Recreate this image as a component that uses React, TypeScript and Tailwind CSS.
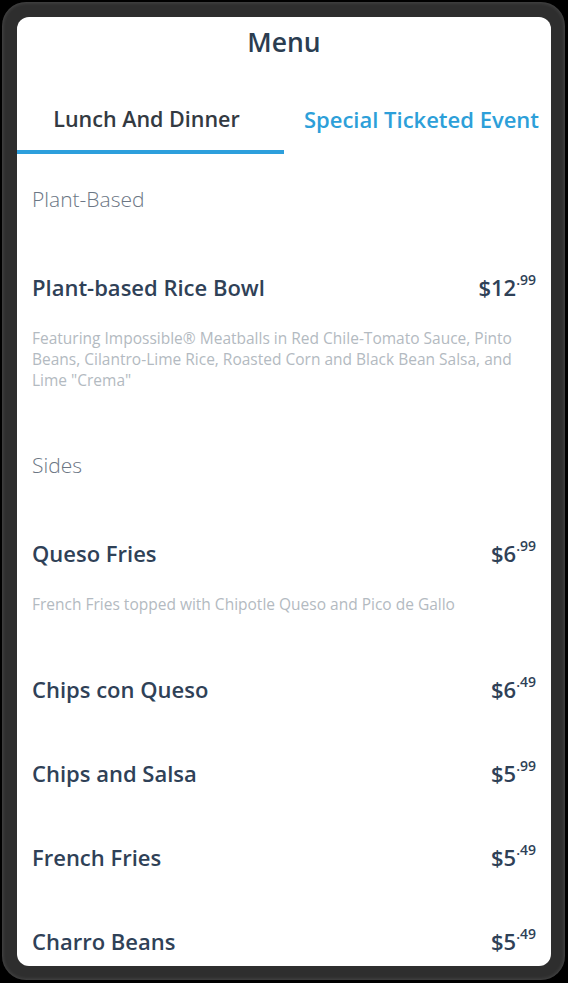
const font = { fontFamily: '"Open Sans", "Noto Sans", sans-serif' };

type Item = { name: string; price: string; cents: string; desc?: string };
type Section = { title: string; items: Item[] };

const sections: Section[] = [
  {
    title: 'Plant-Based',
    items: [
      {
        name: 'Plant-based Rice Bowl',
        price: '$12',
        cents: '.99',
        desc: 'Featuring Impossible® Meatballs in Red Chile-Tomato Sauce, Pinto Beans, Cilantro-Lime Rice, Roasted Corn and Black Bean Salsa, and Lime "Crema"',
      },
    ],
  },
  {
    title: 'Sides',
    items: [
      {
        name: 'Queso Fries',
        price: '$6',
        cents: '.99',
        desc: 'French Fries topped with Chipotle Queso and Pico de Gallo',
      },
      { name: 'Chips con Queso', price: '$6', cents: '.49' },
      { name: 'Chips and Salsa', price: '$5', cents: '.99' },
      { name: 'French Fries', price: '$5', cents: '.49' },
      { name: 'Charro Beans', price: '$5', cents: '.49' },
    ],
  },
];

function MenuItem({ item }: { item: Item }) {
  return (
    <div className="pt-[56px]">
      <div className="flex h-[28px] items-center justify-between">
        <span className="text-[22px] font-semibold text-[#2f4157]">{item.name}</span>
        <span className="flex items-start text-[22px] font-semibold leading-none text-[#2f4157]">
          {item.price}
          <span className="-mt-[3px] text-[14px] font-semibold">{item.cents}</span>
        </span>
      </div>
      {item.desc && (
        <p className="mt-[27px] pb-[4px] text-[15.5px] leading-[21px] text-[#b3bac1]">{item.desc}</p>
      )}
    </div>
  );
}

export default function App() {
  return (
    <div className="h-[983px] w-[568px] overflow-hidden bg-black pl-[2px] pt-[2px]" style={font}>
      <div className="h-[978px] w-[563px] rounded-[24px] bg-[#2e2e2e] p-[15px] shadow-[inset_0_0_4px_rgba(255,255,255,0.18)]">
        <div className="h-[949px] w-[534px] overflow-hidden rounded-[12px] bg-white">
          {/* Header */}
          <div className="flex h-[52px] items-center justify-center">
            <h1 className="text-[26.5px] font-semibold text-[#2b3d51]">Menu</h1>
          </div>

          {/* Tabs */}
          <div className="flex">
            <div className="flex flex-1 flex-col items-center">
              <span className="mt-[38px] h-[24px] pr-[8px] text-[21.5px] font-semibold leading-[24px] text-[#333a42]">
                Lunch And Dinner
              </span>
              <div className="mt-[19px] h-[4px] w-full bg-[#2d9fdc]" />
            </div>
            <div className="flex flex-1 flex-col items-center">
              <span className="mt-[38px] h-[24px] whitespace-nowrap pl-[8px] text-[22px] font-semibold leading-[24px] text-[#2d9fd9]">
                Special Ticketed Event
              </span>
            </div>
          </div>

          {/* Menu list */}
          <div className="px-[15px]">
            {sections.map((section, i) => (
              <div key={section.title}>
                <h2
                  className={`${i === 0 ? 'pt-[31px]' : 'pt-[56px]'} pb-[4px] text-[21px] font-light leading-[28px] text-[#6b7684]`}
                >
                  {section.title}
                </h2>
                {section.items.map((item) => (
                  <MenuItem key={item.name} item={item} />
                ))}
              </div>
            ))}
          </div>
        </div>
      </div>
    </div>
  );
}
